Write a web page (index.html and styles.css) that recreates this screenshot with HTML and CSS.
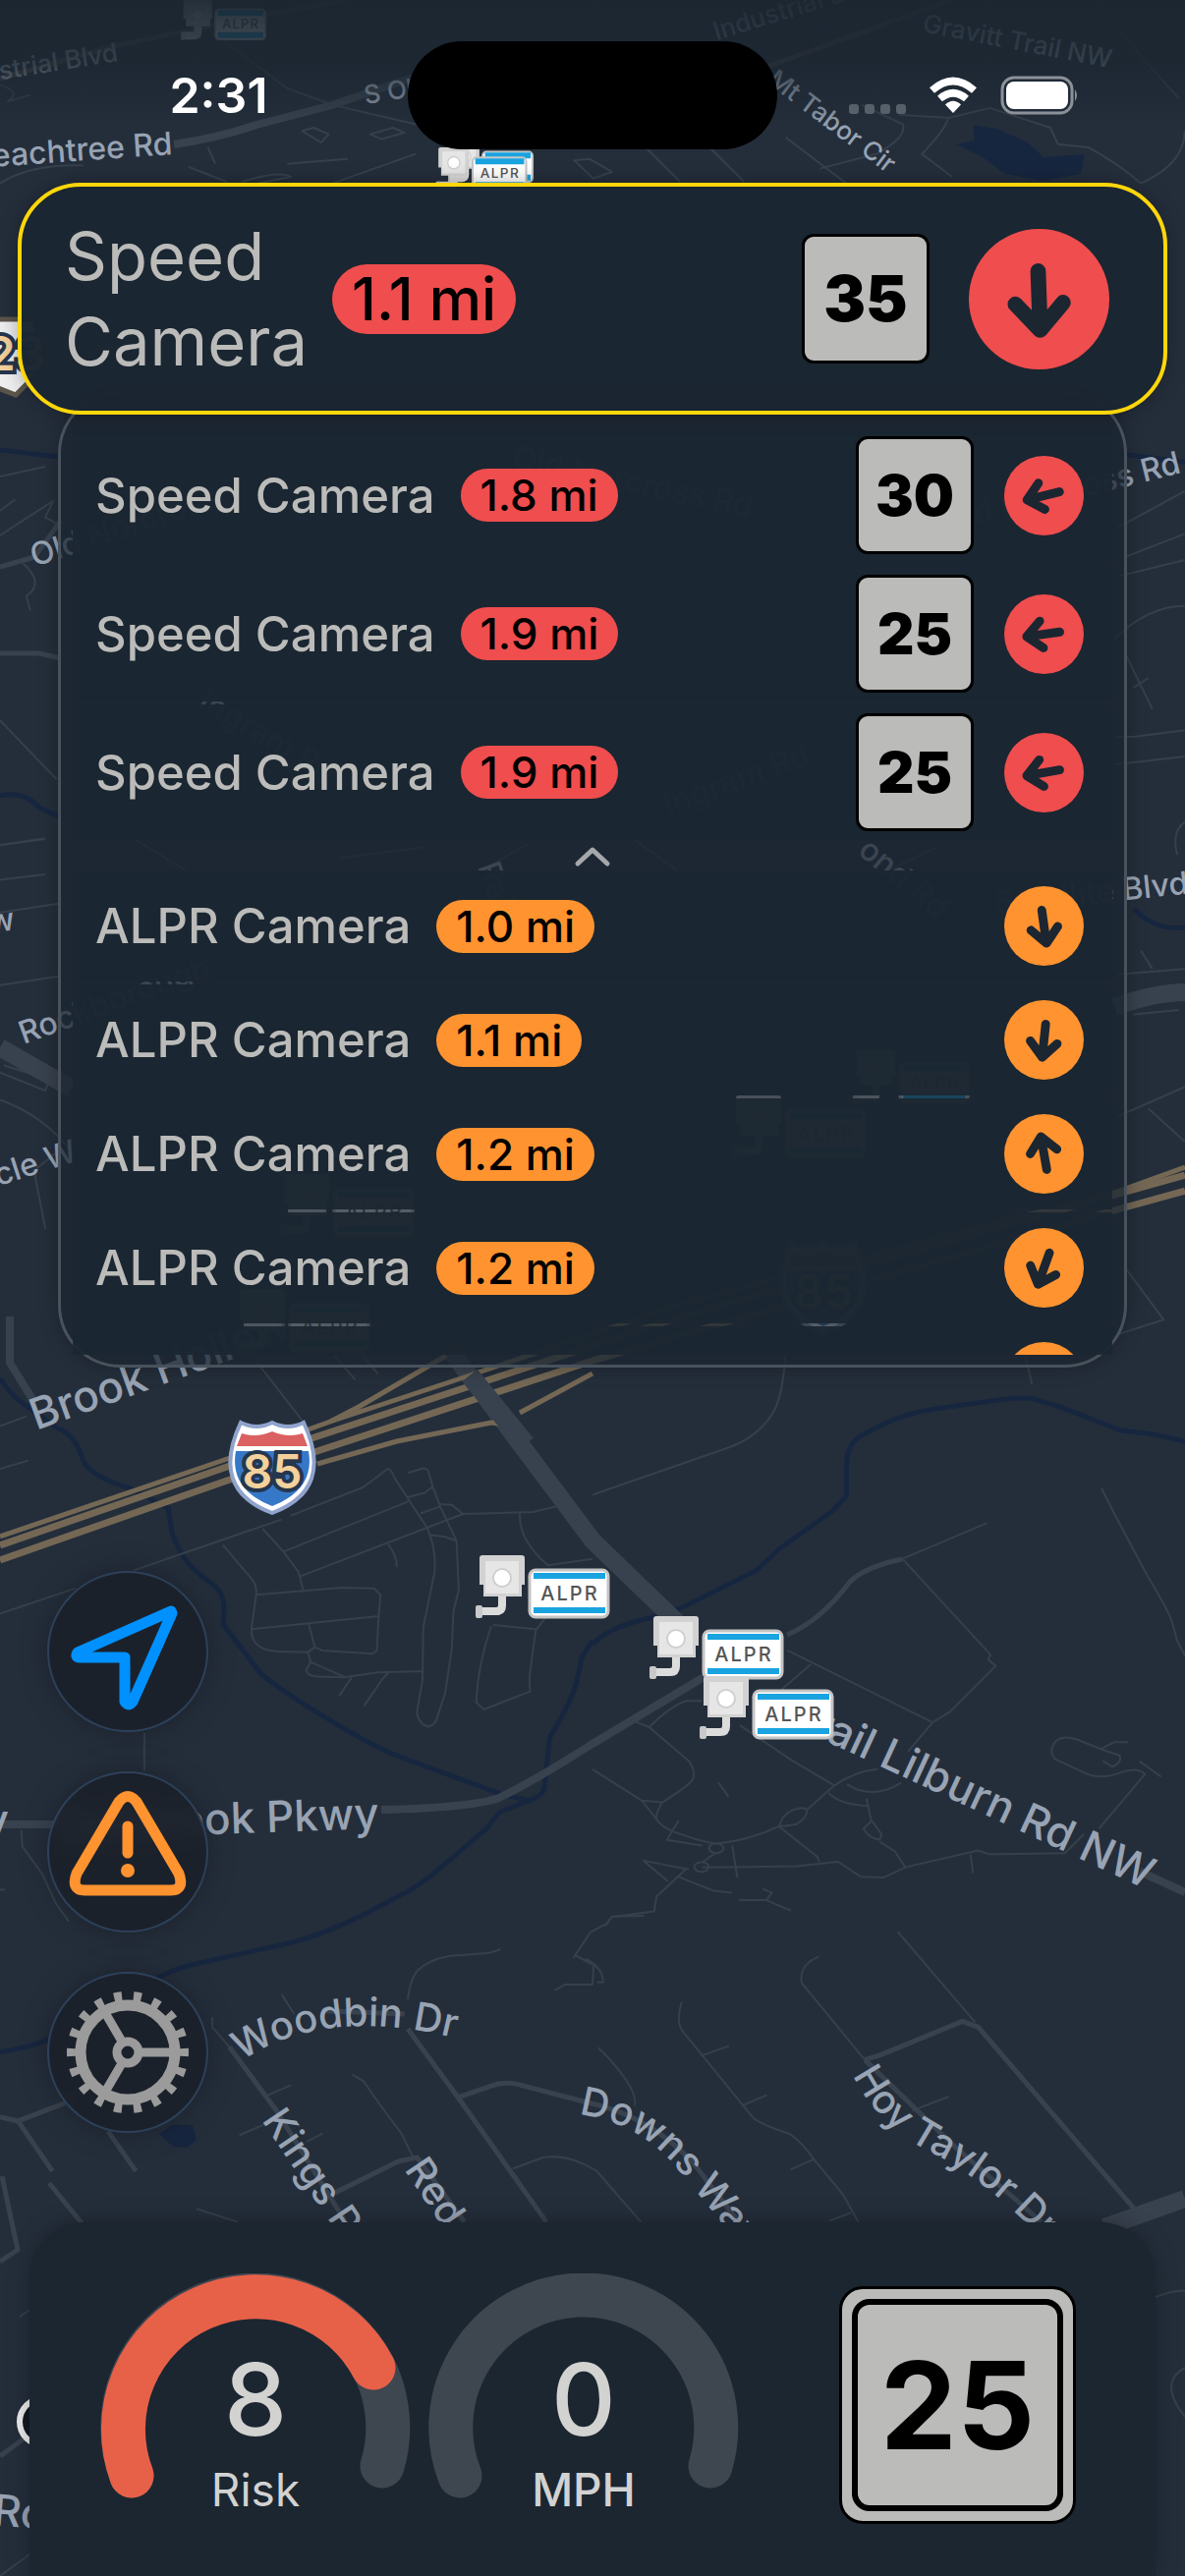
FILE: index.html
```html
<!DOCTYPE html>
<html lang="en">
<head>
  <meta charset="UTF-8">
  <meta name="viewport" content="width=device-width, initial-scale=1.0">
  <title>Camera Alerts</title>
  <link rel="stylesheet" href="styles.css">
</head>

<body>
  <!-- Map background -->
  <svg class="map" viewBox="0 0 1206 2622" preserveAspectRatio="xMidYMid slice" aria-hidden="true">
    <defs>
      <linearGradient id="top-fade" x1="0" y1="0" x2="0" y2="1">
        <stop offset="0" stop-color="#1b2631" stop-opacity="0.95"/>
        <stop offset="0.5" stop-color="#1b2631" stop-opacity="0.8"/>
        <stop offset="1" stop-color="#1b2631" stop-opacity="0"/>
      </linearGradient>
      <symbol id="alpr" viewBox="0 0 138 66" overflow="visible">
        <path d="M27 40v11q0 6-6 6H3" fill="none" stroke="#dcdcdc" stroke-width="8"/>
        <rect x="0" y="51" width="7" height="13" rx="2" fill="#c9c9c9"/>
        <path d="M4 3q0-3 3-3h40q3 0 3 3v27h-3v12H8V30H4z" fill="#d2d2d2"/>
        <path d="M10 6h34v33H10z" fill="#e6e6e6"/>
        <circle cx="27" cy="23" r="9" fill="#fff" stroke="#cfcfcf" stroke-width="2"/>
        <rect x="55" y="15" width="80" height="48" rx="6" fill="#fff" stroke="#c4c4c4" stroke-width="3"/>
        <path d="M59 21h73M59 56h73" stroke="#19a3e0" stroke-width="6"/>
        <text class="plate" x="96" y="46">ALPR</text>
      </symbol>
      <symbol id="i85" viewBox="0 0 92 96" overflow="visible">
        <path d="M14 2Q30 10 46 2Q62 10 78 2Q110 70 46 94Q-18 70 14 2z" fill="#fff" stroke="#8fa3cc" stroke-width="4"/>
        <path d="M15 13Q30 18 46 11Q62 18 77 13L82 26H10z" fill="#db6061"/>
        <path d="M9 31H83Q90 70 46 87Q2 70 9 31z" fill="#3678c8"/>
        <text class="shield" x="46" y="69">85</text>
      </symbol>
    </defs>

    <rect width="1206" height="2622" fill="#242e3b"/>

    <!-- Water -->
    <g class="water">
      <path transform="translate(0 1360) scale(.3846 .3333)" d="M0 130Q30 180 60 205L150 280Q200 300 220 380Q240 430 345 465L445 525L455 600Q480 680 520 720L575 770Q600 800 590 880L690 1030Q750 1090 935 1215Q1000 1260 1060 1285L1330 1400L1400 1418Q1440 1400 1440 1380L1455 1225Q1510 1120 1525 1060L1540 980L1568 930M1400 1418L1320 1455L1290 1500"/>
      <path transform="translate(603 1360) scale(.3846 .3827)" d="M0 820Q40 775 150 750L230 725L435 622L495 565L635 465L672 425V340Q675 280 720 260Q800 215 870 200Q920 190 1110 165H1160L1235 187L1395 250L1490 262L1568 280"/>
      <path transform="translate(0 1560) scale(.3333 .4145)" d="M1490 724L1350 820Q1280 870 1200 900Q1000 990 860 1012L620 1055Q550 1065 490 1090L145 1245Q90 1265 0 1275"/>
      <path d="M0 458L60 465M0 810Q25 805 40 822L62 832M1154 925Q1176 948 1206 944M1140 462L1206 470"/>
      <path class="pond" d="M162 2172L175 2163H196L200 2178L190 2186L176 2185z"/>
      <path class="pond" d="M990 127L1015 131L1046 145L1062 160L1104 157L1100 177L1062 184L1023 177L1000 160L973 147L992 143z"/>
    </g>

    <!-- Local roads -->
    <g class="road">
      <path transform="translate(0 1360) scale(.3846 .3333)" d="M0 848L200 770M355 715L745 560M770 548L960 462Q1010 420 1025 405Q1035 405 1045 435L1130 585Q1155 650 1150 720L1120 890L1118 1050L1103 1150Q1110 1190 1135 1192Q1155 1185 1158 1160L1178 1090L1195 960L1200 840L1214 775L1208 625L1165 520L1145 460L1133 410Q1125 400 1115 405L1080 418M1080 492L1125 478L1145 460M1112 542L1165 520M750 658L1080 505M795 733L1130 585L1225 543L1410 537L1492 515M1165 513L1195 515L1225 543M1135 607L1175 612L1208 625M695 588L750 658L790 720L802 775M1027 635Q1050 670 1050 705M590 638L665 740Q680 760 678 790L665 895Q665 960 735 963L815 965L833 950L817 878M678 790L905 768L990 770L1007 790L1002 855L997 960L985 970L853 960L833 950M665 895L1002 855M815 965L822 995L810 1020Q812 1040 850 1040L910 1042L1000 1027L1120 1023M822 995L910 1040M930 1043L897 1100M1030 1025L1010 1050L963 1130M1376 540Q1370 620 1450 700L1568 680M1420 895L1450 850M1305 882L1418 895L1402 1030Q1400 1060 1403 1085L1280 1140L1260 1118Q1265 1000 1300 885M680 80L800 258M885 60L940 133M960 60L1000 115M382 1212V1328M0 405L75 380M0 275L70 245"/>
      <path transform="translate(603 1360) scale(.3846 .3827)" d="M510 50Q505 150 480 200Q440 270 350 300L0 422M1145 50L1163 128M820 592L1045 497M820 592L1053 847L1047 860L1067 877L945 1000L900 1027L835 1105M1347 405L1385 480L1470 640Q1530 740 1535 765L1547 810L1568 850M515 835L900 1027M578 873L500 940M150 1040Q210 980 250 970H290M105 1022L150 1040L255 1130Q275 1160 265 1180Q255 1195 185 1240Q165 1270 170 1285Q180 1305 220 1320Q290 1345 325 1350Q420 1340 495 1303Q500 1275 530 1260Q560 1250 567 1260Q570 1280 540 1298Q500 1305 495 1303M567 1260L640 1195Q700 1155 755 1152M390 1035L530 1130L640 1195M0 1152L130 1235L185 1240M130 1235L170 1285M673 1192Q740 1235 817 1188M625 1215Q650 1245 730 1250M725 1230L738 1290L717 1310Q730 1335 760 1340L765 1325L740 1290M760 1345L800 1370L828 1413M495 1305L595 1385L600 1398M290 1413L540 1410L650 1398L710 1438L770 1440L830 1412L1020 1368L1050 1378L1250 1375L1300 1325M1000 1378L1007 1428M1340 1310L1462 1165Q1440 1145 1400 1160Q1350 1180 1310 1165L1225 1125Q1205 1105 1225 1078Q1245 1060 1280 1072L1350 1100L1395 1115Q1402 1135 1375 1145L1350 1130M1345 1098L1380 1080H1417M1447 1130L1505 1172M327 1349a19 13 0 1 0 1 0M288 1399a19 13 0 1 0 1 0M250 1415L170 1490L163 1530L50 1545L35 1568M255 1418L135 1395L200 1450M228 1438L320 1475L370 1480M325 1375L290 1400M370 1355L383 1440M388 1500H460L475 1480L450 1470M460 1500L525 1528M333 1187L360 1225M228 1288L197 1340L290 1355"/>
      <path transform="translate(200 1950) scale(.6416 .3333)" d="M335 255Q340 180 355 160Q380 122 420 120L465 113L482 103M710 0L660 2L650 25L625 50L598 128M600 120L630 150L628 210H585L568 228M618 132Q645 160 645 203H635M135 240L155 300M25 310V340L52 400M110 550L150 517M247 485L265 505Q280 550 325 665L343 735M68 670L110 635M175 690L200 665M637 403Q650 425 665 460Q700 540 695 580M770 262Q760 320 770 350L880 610Q890 635 940 665Q960 690 980 745L1025 850L1050 935M800 428L845 397M865 580L905 547M942 775L980 743M1003 932L1038 907M987 125Q955 150 960 205L1060 440M1112 48L1235 325M1135 595L1193 552M502 772L550 738Q590 725 635 780L705 935M0 895L65 935"/>
      <path transform="translate(0 1560) scale(.3333 .4145)" d="M65 730L68 770L130 840L170 910L210 955M0 877H15"/>
      <path transform="scale(.769 .3333)" d="M260 60L380 270L440 320L560 385M550 470L440 560M1040 420L1120 560M1190 350L1255 360Q1250 400 1220 470L1260 540M1255 360L1310 330L1390 390L1400 440L1440 450Q1480 500 1510 560M1085 515L1160 470Q1200 420 1195 380L1140 320M850 440L900 555M930 430L985 555M760 490L785 545L810 525L780 485zM490 410L520 390L535 405L505 425zM400 400L425 435L435 410L415 390zM250 510L300 555M275 450L285 500M320 555Q370 520 385 540L340 560M0 560Q40 500 110 505M0 260Q30 280 10 310L40 290M1510 560Q1568 500 1568 400M1450 0Q1500 150 1560 300M380 500L460 485"/>
      <path transform="translate(0 420) scale(.769 .3333)" d="M0 195L60 165M0 300L20 265M0 375L70 270L60 320L80 345M30 460Q60 520 35 560L40 605M0 940L75 1120M0 1320L60 1300M1480 350L1568 240M1490 440L1568 370M1480 500L1568 450M1475 690Q1520 590 1568 590M1490 740L1525 905M1500 840L1520 810M1475 990H1500L1568 970M1475 1075L1568 1050M1568 1250Q1550 1280 1558 1350"/>
      <path transform="translate(0 840) scale(.769 .37)" d="M0 55L60 38M0 150L60 135M0 240L80 215M0 440L80 415M5 660L65 700L60 730L0 680M0 755Q60 800 95 900M75 900L45 950L60 1110M1490 1220L1540 1360L1480 1400M1480 800L1568 720M1500 520L1560 508M1520 780L1568 870M1510 345L1525 395M1480 410L1568 395M180 40L250 130M450 90L560 60M640 120L700 50M900 130L840 40M1170 130L1240 60"/>
      <path d="M20 2358L44 2342M1176 2338Q1200 2330 1206 2332M1206 2410Q1178 2425 1206 2460M0 2622L30 2600"/>
    </g>

    <g class="road-mid">
      <path transform="translate(200 1950) scale(.6416 .3333)" d="M335 345L415 555L555 935M415 555L470 518Q490 505 510 515L620 570Q720 610 790 760L860 935M52 400L125 590L235 930M220 845L320 750L350 738L425 935M1060 440L1085 425L1215 322L1240 340L1495 912M1060 440L1200 700L1340 935M200 290L330 300"/>
      <path transform="translate(0 1560) scale(.3333 .4145)" d="M0 1435L55 1445L200 1400M55 1445L160 1568M330 1470L415 1568"/>
      <path d="M801 1664Q835 1650 865 1610Q880 1595 918 1587M0 577L35 567L62 530M0 665H40L62 670M0 2302L18 2290L2 2215M50 2222L84 2264M0 2500L30 2478"/>
    </g>

    <g class="road-wide">
      <path d="M388 1842Q480 1840 508 1830Q545 1812 603 1775L718 1706"/>
      <path d="M0 1857H55"/>
      <path d="M177 147Q223 140 261 127L338 107L431 75"/>
      <path d="M10 1340V1387L33 1424"/>
      <path d="M1160 1905L1206 1926"/>
    </g>
    <g class="road-main">
      <path d="M455 1370L603 1568L690 1652"/>
      <path d="M0 1066L73 1108M1134 1025Q1176 1010 1206 1010M1124 2267L1206 2238"/>
    </g>

    <!-- Interstate -->
    <g class="highway">
      <path class="thin" d="M0 1564L231 1485L336 1447L475 1401L700 1325L1134 1214L1206 1188M323 1490L404 1467L500 1448L513 1450M529 1438L603 1398M336 1447L365 1432L454 1380"/>
      <path d="M0 1573L231 1493L320 1463L475 1412L700 1338L1206 1196M0 1588L231 1507L323 1477L603 1385L1134 1232L1206 1212"/>
      <path class="thin dim" d="M0 80L115 47L269 15L354 0M769 72L969 0"/>
    </g>
    <path d="M478 1400L535 1470" stroke="#38414e" stroke-width="20"/>

    <!-- Street names -->
    <g class="label">
      <path id="trail" d="M700 1655Q755 1730 838 1771L1166 1923" fill="none"/>
      <path id="woodbin" d="M246 2098Q330 2040 470 2076" fill="none"/>
      <path id="downs" d="M589 2152Q650 2160 690 2208L790 2330" fill="none"/>
      <path id="hoy" d="M868 2112Q895 2166 950 2192Q1010 2222 1080 2300" fill="none"/>
      <text transform="translate(37 1456) rotate(-20)">Brook Hollow</text>
      <text transform="translate(386 1861) rotate(-2)" text-anchor="end">Oakbrook Pkwy</text>
      <text x="9" y="1868" text-anchor="end">y</text>
      <text><textPath href="#trail" startOffset="100%" text-anchor="end">Trail Lilburn Rd NW</textPath></text>
      <text transform="translate(-8 2570) rotate(5)">Ro</text>
    </g>
    <g class="label street">
      <text><textPath href="#woodbin">Woodbin Dr</textPath></text>
      <text transform="translate(266 2158) rotate(56)">Kings P</text>
      <text transform="translate(411 2208) rotate(56)">Red</text>
      <text><textPath href="#downs">Downs Way</textPath></text>
      <text><textPath href="#hoy">Hoy Taylor Dr</textPath></text>
    </g>
    <g class="label small">
      <text transform="translate(176 157) rotate(-4)" text-anchor="end">Peachtree Rd</text>
      <text transform="translate(1203 481) rotate(-14)" text-anchor="end">Old Norcross Rd</text>
      <text transform="translate(35 577) rotate(-18)">Old Norcross</text>
      <text transform="translate(520 475) rotate(12)">Old Norcross Rd</text>
      <text transform="translate(200 720) rotate(30)">Ingram Rd</text>
      <text transform="translate(680 830) rotate(-20)">Ingram Rd</text>
      <text transform="translate(16 946) rotate(-8)" text-anchor="end">w</text>
      <text transform="translate(24 1063) rotate(-20)">Rockborough</text>
      <text transform="translate(80 1181) rotate(-18)" text-anchor="end">Circle W</text>
      <text transform="translate(1014 930) rotate(-6)">Satellite Blvd</text>
      <text transform="translate(486 882) rotate(70)">Rain</text>
      <text transform="translate(872 868) rotate(40)">ond Rd</text>
    </g>
    <g class="label far">
      <text transform="translate(121 62) rotate(-9)" text-anchor="end">Industrial Blvd</text>
      <text transform="translate(729 41) rotate(-17)">Industrial Blvd</text>
      <text transform="translate(938 32) rotate(11)">Gravitt Trail NW</text>
      <text transform="translate(372 106) rotate(-9)">S Old Peachtree</text>
      <text transform="translate(780 84) rotate(37)">Mt Tabor Cir</text>
    </g>

    <!-- Markers -->
    <use href="#i85" x="231" y="1446" width="92" height="96"/>
    <use href="#i85" x="792" y="1263" width="92" height="96"/>
    <use href="#alpr" x="484" y="1583" width="138" height="66"/>
    <use href="#alpr" x="661" y="1645" width="138" height="66"/>
    <use href="#alpr" x="712" y="1706" width="138" height="66"/>
    <use href="#alpr" x="184" y="0" width="88" height="42"/>
    <use href="#alpr" x="456" y="145" width="88" height="42"/>
    <use href="#alpr" x="443" y="150" width="95" height="45"/>
    <use href="#alpr" x="868" y="1068" width="120" height="58"/>
    <use href="#alpr" x="745" y="1115" width="138" height="66"/>
    <use href="#alpr" x="285" y="1195" width="138" height="66"/>
    <use href="#alpr" x="240" y="1312" width="138" height="66"/>
    <g>
      <path d="M-30 325H34Q46 360 34 384L16 402L-30 384z" fill="#eee" stroke="#5b544b" stroke-width="5"/>
      <text class="route" x="16" y="377">23</text>
      <circle cx="44" cy="2465" r="24" fill="#111a22" stroke="#eee" stroke-width="6"/>
    </g>

    <rect width="1206" height="130" fill="url(#top-fade)"/>
  </svg>

  <!-- Shared shapes -->
  <svg class="hidden" aria-hidden="true">
    <symbol id="arrow" viewBox="0 0 100 100">
      <path d="M50 30V71M33 53L50 72L67 53" fill="none" stroke="#1b2631" stroke-width="11" stroke-linecap="round" stroke-linejoin="round"/>
    </symbol>
  </svg>

  <div class="screen">
    <header class="status-bar">
      <span class="time">2:31</span>
      <span class="island"></span>
      <div class="status-icons">
        <svg width="58" height="10" viewBox="0 0 58 10" class="cell">
          <rect width="10" height="10" rx="3"/><rect x="16" width="10" height="10" rx="3"/>
          <rect x="32" width="10" height="10" rx="3"/><rect x="48" width="10" height="10" rx="3"/>
        </svg>
        <svg width="52" height="38" viewBox="0 0 52 38">
          <path d="M26 37L18 28.500Q26 21 34 28.500z" fill="#fff"/>
          <path d="M12.500 22.500Q26 11 39.500 22.500M4.500 14Q26-5 47.500 14" fill="none" stroke="#fff" stroke-width="7.500"/>
        </svg>
        <svg width="80" height="40" viewBox="0 0 80 40">
          <rect x="2" y="2" width="71" height="36" rx="12" fill="none" stroke="#8b9199" stroke-width="3"/>
          <rect x="6" y="6" width="63" height="28" rx="8" fill="#fff"/>
          <path d="M76 14q4 6 0 12z" fill="#8b9199"/>
        </svg>
      </div>
    </header>

    <main>
      <section class="alert">
        <h1>Speed Camera</h1>
        <span class="pill red">1.1 mi</span>
        <span class="sign">35</span>
        <svg class="direction red" viewBox="0 0 100 100"><use href="#arrow" transform="rotate(-2 50 50)"/></svg>
      </section>

      <section class="panel">
        <ul class="list speed">
          <li>
            <span class="name">Speed Camera</span>
            <span class="pill red">1.8 mi</span>
            <span class="sign">30</span>
            <svg class="direction red" viewBox="0 0 100 100"><use href="#arrow" transform="rotate(76 50 50)"/></svg>
          </li>
          <li>
            <span class="name">Speed Camera</span>
            <span class="pill red">1.9 mi</span>
            <span class="sign">25</span>
            <svg class="direction red" viewBox="0 0 100 100"><use href="#arrow" transform="rotate(82 50 50)"/></svg>
          </li>
          <li>
            <span class="name">Speed Camera</span>
            <span class="pill red">1.9 mi</span>
            <span class="sign">25</span>
            <svg class="direction red" viewBox="0 0 100 100"><use href="#arrow" transform="rotate(80 50 50)"/></svg>
          </li>
        </ul>

        <button class="collapse" type="button" aria-label="Collapse">
          <svg width="38" height="22" viewBox="0 0 38 22"><path d="M4 18L19 4L34 18" fill="none" stroke="#a4a8ab" stroke-width="5" stroke-linecap="round" stroke-linejoin="round"/></svg>
        </button>

        <ul class="list alpr">
          <li>
            <span class="name">ALPR Camera</span>
            <span class="pill orange">1.0 mi</span>
            <svg class="direction orange" viewBox="0 0 100 100"><use href="#arrow" transform="rotate(-8 50 50)"/></svg>
          </li>
          <li>
            <span class="name">ALPR Camera</span>
            <span class="pill orange">1.1 mi</span>
            <svg class="direction orange" viewBox="0 0 100 100"><use href="#arrow" transform="rotate(6 50 50)"/></svg>
          </li>
          <li>
            <span class="name">ALPR Camera</span>
            <span class="pill orange">1.2 mi</span>
            <svg class="direction orange" viewBox="0 0 100 100"><use href="#arrow" transform="rotate(170 50 50)"/></svg>
          </li>
          <li>
            <span class="name">ALPR Camera</span>
            <span class="pill orange">1.2 mi</span>
            <svg class="direction orange" viewBox="0 0 100 100"><use href="#arrow" transform="rotate(20 50 50)"/></svg>
          </li>
          <li>
            <svg class="direction orange" viewBox="0 0 100 100"><use href="#arrow"/></svg>
          </li>
        </ul>
      </section>
    </main>

    <nav class="map-buttons">
      <button type="button" aria-label="Recenter">
        <svg viewBox="0 0 164 164"><path d="M126 41L31 83Q28 88 33 88H79V133Q83 139 87 133L127 43Z" fill="none" stroke="#0091ff" stroke-width="11" stroke-linejoin="round"/></svg>
      </button>
      <button type="button" aria-label="Report">
        <svg viewBox="0 0 164 164">
          <path d="M73 31Q82 20 91 31L134 104Q140 121 126 121H38Q24 121 30 104Z" fill="none" stroke="#ff9330" stroke-width="11" stroke-linejoin="round"/>
          <path d="M82 56V83" stroke="#ff9330" stroke-width="11" stroke-linecap="round"/>
          <circle cx="82" cy="101" r="7" fill="#ff9330"/>
        </svg>
      </button>
      <button type="button" aria-label="Settings">
        <svg viewBox="0 0 164 164" fill="none" stroke="#9b9b9b">
          <circle cx="82" cy="82" r="48" stroke-width="11"/>
          <circle cx="82" cy="82" r="56" stroke-width="12" pathLength="180" stroke-dasharray="4 6" stroke-dashoffset="2"/>
          <circle cx="82" cy="82" r="11" stroke-width="9"/>
          <path d="M97 82H127M75 69L58 40M75 95L58 124" stroke-width="9"/>
        </svg>
      </button>
    </nav>

    <footer class="dashboard">
      <div class="gauge">
        <svg viewBox="0 0 316 250">
          <path class="track" d="M32 206A135 135 0 1 1 287 196"/>
          <path class="fill" d="M32 206A135 135 0 0 1 278 96"/>
        </svg>
        <strong>8</strong>
        <span>Risk</span>
      </div>
      <div class="gauge speed-gauge">
        <svg viewBox="0 0 316 250">
          <path class="track" d="M32 206A135 135 0 1 1 287 196"/>
        </svg>
        <strong>0</strong>
        <span>MPH</span>
      </div>
      <div class="limit"><span>25</span></div>
    </footer>
  </div>
</body>
</html>
```
FILE: styles.css
```css
* {
  box-sizing: border-box;
}

body {
  margin: 0;
  font-family: Inter, "Liberation Sans", sans-serif;
  background-color: #242e3b;
  color: #bbbbb9;
}

button {
  padding: 0;
  border: none;
  background: none;
  cursor: pointer;
}

.hidden {
  position: absolute;
  width: 0;
  height: 0;
}

/* Map */
.map {
  position: absolute;
  top: 0;
  left: 0;
  width: 100%;
  height: 100%;
}

.map path {
  vector-effect: non-scaling-stroke;
}

.road, .road-mid, .road-wide, .road-main, .water, .highway {
  fill: none;
  stroke: #35404c;
  stroke-width: 2px;
  stroke-linejoin: round;
}

.road-mid {
  stroke: #38424e;
  stroke-width: 5px;
}

.road-wide {
  stroke: #38424e;
  stroke-width: 8px;
}

.road-main {
  stroke: #38414e;
  stroke-width: 18px;
}

.water {
  stroke: #17263f;
  stroke-width: 5px;
}

.pond {
  fill: #17263f;
  stroke: none;
}

.highway {
  stroke: #746855;
  stroke-width: 7px;
}

.highway .thin {
  stroke-width: 5px;
}

.highway .dim {
  opacity: 0.5;
}

.label {
  font-size: 44px;
  font-weight: 500;
  fill: #98a3b3;
}

.street {
  font-size: 40px;
}

.small {
  font-size: 32px;
}

.far {
  font-size: 26px;
}

.plate {
  font-size: 20px;
  font-weight: 500;
  fill: #555;
  text-anchor: middle;
  letter-spacing: 2px;
}

.shield, .route {
  font-size: 48px;
  font-weight: 600;
  fill: #f3d19c;
  stroke: #26364d;
  stroke-width: 8px;
  paint-order: stroke;
  text-anchor: middle;
}

/* Layout */
.screen {
  position: relative;
  display: flex;
  flex-direction: column;
  min-height: 100vh;
}

.status-bar {
  display: grid;
  grid-template-columns: 1fr 376px 1fr;
  align-items: center;
  padding-top: 42px;
  color: white;
}

.time {
  padding-left: 30px;
  font-size: 50px;
  font-weight: 600;
  text-align: center;
}

.island {
  height: 110px;
  border-radius: 55px;
  background: black;
}

.status-icons {
  display: flex;
  justify-content: flex-end;
  align-items: center;
  gap: 22px;
  padding-right: 108px;
}

.cell {
  margin-top: 28px;
  fill: #56606b;
}

/* Nearest camera */
.alert {
  position: relative;
  z-index: 1;
  display: flex;
  align-items: center;
  height: 236px;
  margin: 34px 18px 0;
  padding: 0 55px 0 44px;
  border: 4px solid #ffd60a;
  border-radius: 64px;
  background: rgba(27, 38, 49, 0.98);
  box-shadow: 0 0 20px rgba(0, 0, 0, 0.3);
}

.alert h1 {
  width: 272px;
  margin: 0;
  font-size: 67px;
  font-weight: 400;
  line-height: 87px;
}

.pill {
  padding: 0 20px;
  border-radius: 36px;
  font-size: 44px;
  font-weight: 500;
  line-height: 54px;
  color: black;
}

.alert .pill {
  font-size: 60px;
  line-height: 71px;
}

.red {
  background: #ef4d4e;
}

.orange {
  background: #ff9330;
}

.sign {
  width: 120px;
  margin-left: auto;
  border: 3px solid black;
  border-radius: 12px;
  background: #bbbbb9;
  color: black;
  font-size: 58px;
  font-weight: 900;
  line-height: 114px;
  text-align: center;
}

.alert .sign {
  width: 130px;
  font-size: 64px;
  line-height: 126px;
}

.direction {
  width: 81px;
  height: 81px;
  margin-left: auto;
  border-radius: 50%;
}

.sign + .direction {
  margin-left: 31px;
}

.alert .direction {
  width: 143px;
  height: 143px;
  margin-left: 40px;
}

/* Other cameras */
.panel {
  margin: -24px 59px 0;
  padding: 34px 0 10px;
  border: 3px solid #47525c;
  border-radius: 64px;
  background: rgba(27, 38, 49, 0.75);
  box-shadow: 0 0 20px rgba(0, 0, 0, 0.3);
}

.list {
  margin: 0 12px;
  padding: 0;
  list-style: none;
}

.list li {
  display: flex;
  align-items: center;
  height: 138px;
  margin-bottom: 3px;
  padding: 0 29px 0 23px;
  background: rgba(27, 38, 49, 0.94);
}

.name {
  margin-right: 26px;
  font-size: 49px;
  font-weight: 500;
}

.alpr {
  max-height: 493px;
  overflow: hidden;
}

.alpr li {
  height: 113px;
}

.collapse {
  display: block;
  width: 100%;
  height: 28px;
}

.collapse svg {
  display: block;
  margin: 0 auto;
}

/* Floating buttons */
.map-buttons {
  display: flex;
  flex-direction: column;
  gap: 40px;
  margin: auto 0 91px 48px;
}

.map-buttons button {
  width: 164px;
  height: 164px;
  border: 2px solid #2d4059;
  border-radius: 50%;
  background: rgba(27, 33, 42, 0.92);
  backdrop-filter: blur(8px);
  box-shadow: 0 0 30px rgba(0, 0, 0, 0.3);
}

.map-buttons svg {
  display: block;
  margin: -2px;
  width: 164px;
  height: 164px;
}

/* Dashboard */
.dashboard {
  display: flex;
  align-items: flex-start;
  gap: 18px;
  min-height: 360px;
  margin: 0 30px;
  padding: 52px 81px 0 72px;
  border-radius: 56px 56px 0 0;
  background: #1b2631;
  box-shadow: 0 0 24px rgba(0, 0, 0, 0.3);
}

.gauge {
  display: grid;
  justify-items: center;
  width: 316px;
  color: #d2d2d1;
}

.gauge svg {
  grid-area: 1 / 1;
  width: 316px;
}

.gauge path {
  fill: none;
  stroke: #3e464f;
  stroke-width: 45px;
  stroke-linecap: round;
}

.gauge .fill {
  stroke: #e76148;
}

.gauge strong {
  grid-area: 1 / 1;
  padding-top: 66px;
  font-size: 102px;
  font-weight: 500;
  line-height: 124px;
}

.gauge span {
  margin-top: -58px;
  font-size: 46px;
  line-height: 56px;
}

.speed-gauge span {
  font-weight: 500;
}

.limit {
  width: 241px;
  margin: 13px 0 0 auto;
  padding: 10px;
  border: 3px solid black;
  border-radius: 24px;
  background: #bbbbb9;
}

.limit span {
  display: block;
  border: 6px solid black;
  border-radius: 18px;
  color: black;
  font-size: 124px;
  font-weight: 700;
  line-height: 204px;
  text-align: center;
}
```
